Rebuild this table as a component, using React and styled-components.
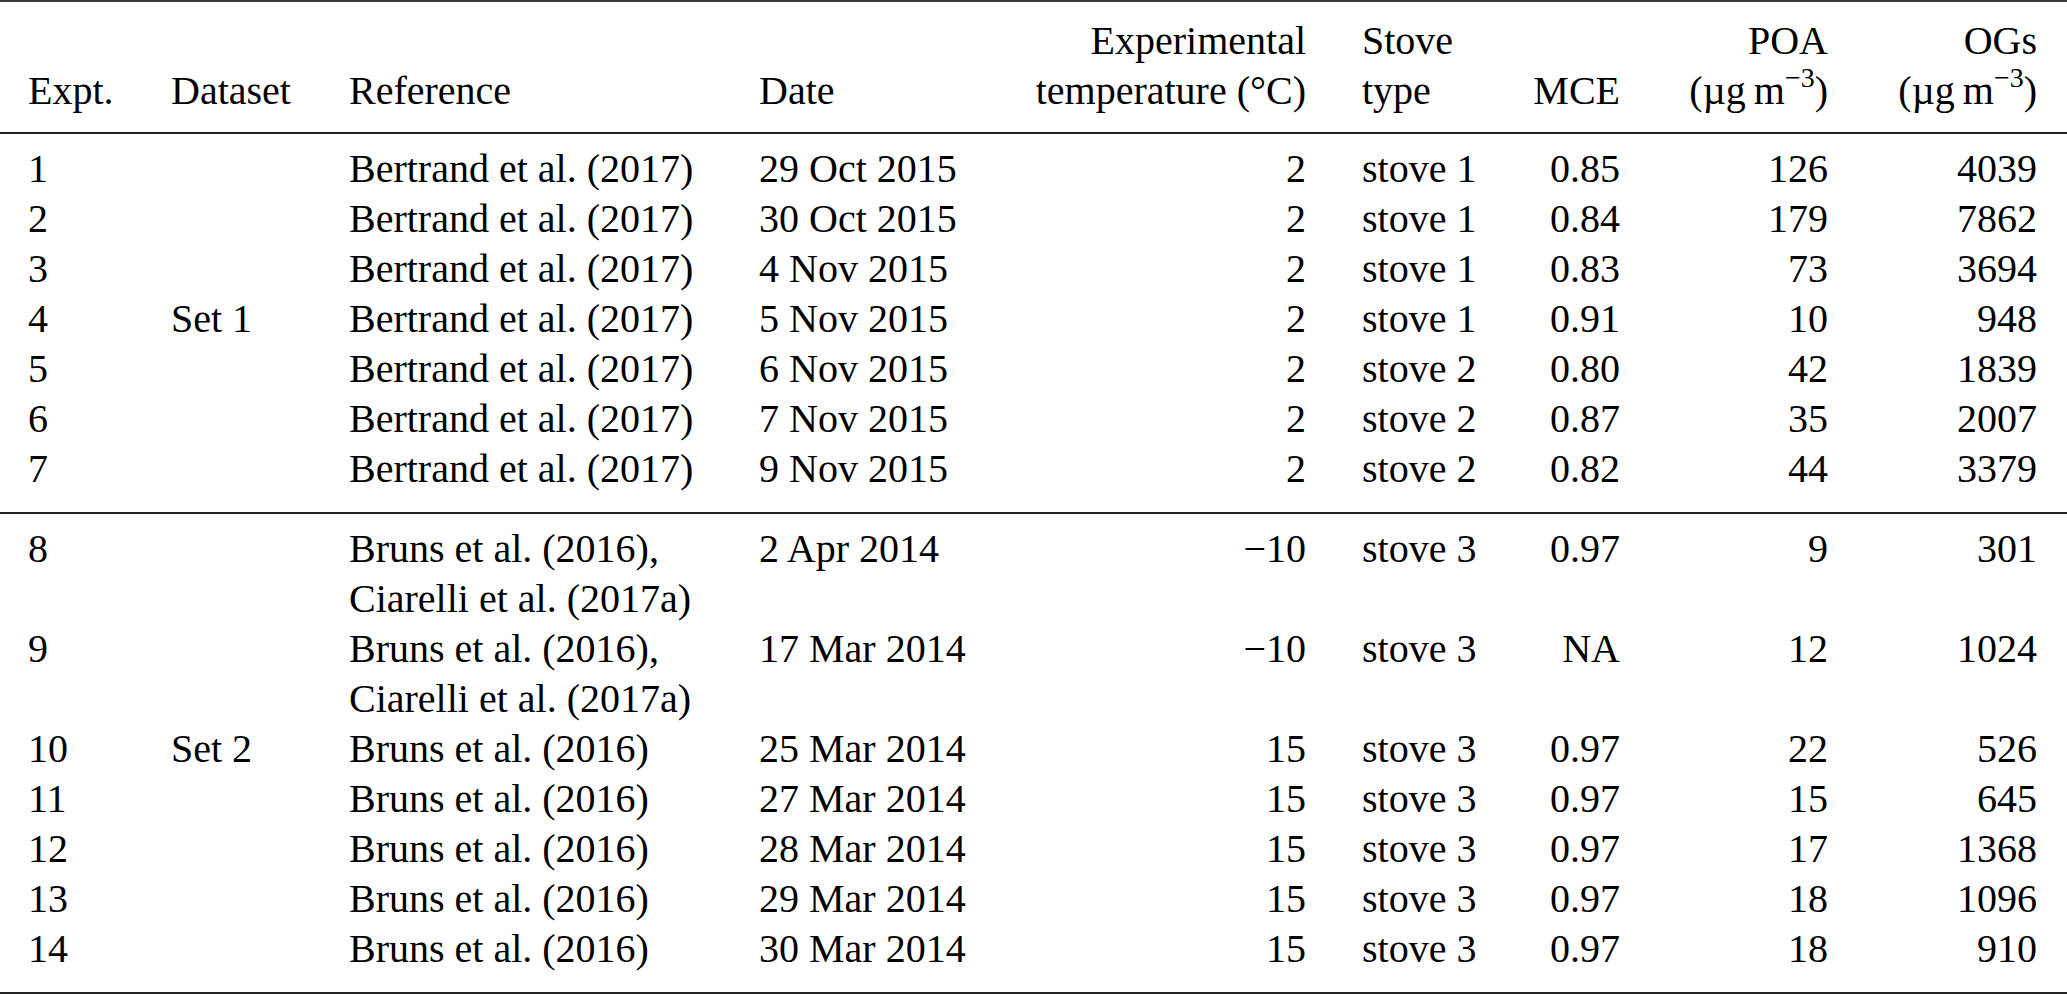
import styled, { createGlobalStyle } from "styled-components";

const GlobalStyle = createGlobalStyle`
  html, body {
    margin: 0;
    padding: 0;
    background: #fff;
  }
`;

const columns = [
  { w: 171, pl: 28 },
  { w: 178 },
  { w: 410 },
  { w: 141 },
  { w: 406, right: true },
  { w: 170, pl: 56 },
  { w: 144, right: true },
  { w: 208, right: true },
  { w: 239, right: true, pr: 30 },
];

const Table = styled.table`
  width: 2067px;
  table-layout: fixed;
  border-collapse: separate;
  border-spacing: 0;
  font-family: "Liberation Serif", "Times New Roman", serif;
  font-size: 40px;
  line-height: 50px;
  color: #000;
`;

const Col = styled.col`
  width: ${(p) => p.$w}px;
`;

const HeadCell = styled.th`
  font-weight: normal;
  text-align: ${(p) => (p.$right ? "right" : "left")};
  vertical-align: bottom;
  padding: 14px ${(p) => p.$pr || 0}px 16px ${(p) => p.$pl || 0}px;
  border-top: 2px solid #3a3a3a;
  border-bottom: 2px solid #222;
  white-space: nowrap;
`;

const Cell = styled.td`
  text-align: ${(p) => (p.$right ? "right" : "left")};
  vertical-align: top;
  padding: ${(p) => (p.$first ? 10 : 0)}px ${(p) => p.$pr || 0}px
    ${(p) => (p.$last ? 18 : 0)}px ${(p) => p.$pl || 0}px;
  border-bottom: ${(p) => (p.$last ? "2px solid #222" : "none")};
  white-space: nowrap;
`;

const Sup = styled.sup`
  font-size: 0.7em;
  line-height: 0;
  vertical-align: 0.62em;
`;

const Unit = () => (
  <>
    (µg{"\u2009"}m<Sup>−3</Sup>)
  </>
);

const header = [
  "Expt.",
  "Dataset",
  "Reference",
  "Date",
  <>
    Experimental
    <br />
    temperature (°C)
  </>,
  <>
    Stove
    <br />
    type
  </>,
  "MCE",
  <>
    POA
    <br />
    <Unit />
  </>,
  <>
    OGs
    <br />
    <Unit />
  </>,
];

const bert = "Bertrand et al. (2017)";
const bruns = "Bruns et al. (2016)";
const both = (
  <>
    Bruns et al. (2016),
    <br />
    Ciarelli et al. (2017a)
  </>
);

const groups = [
  [
    ["1", "", bert, "29 Oct 2015", "2", "stove 1", "0.85", "126", "4039"],
    ["2", "", bert, "30 Oct 2015", "2", "stove 1", "0.84", "179", "7862"],
    ["3", "", bert, "4 Nov 2015", "2", "stove 1", "0.83", "73", "3694"],
    ["4", "Set 1", bert, "5 Nov 2015", "2", "stove 1", "0.91", "10", "948"],
    ["5", "", bert, "6 Nov 2015", "2", "stove 2", "0.80", "42", "1839"],
    ["6", "", bert, "7 Nov 2015", "2", "stove 2", "0.87", "35", "2007"],
    ["7", "", bert, "9 Nov 2015", "2", "stove 2", "0.82", "44", "3379"],
  ],
  [
    ["8", "", both, "2 Apr 2014", "−10", "stove 3", "0.97", "9", "301"],
    ["9", "", both, "17 Mar 2014", "−10", "stove 3", "NA", "12", "1024"],
    ["10", "Set 2", bruns, "25 Mar 2014", "15", "stove 3", "0.97", "22", "526"],
    ["11", "", bruns, "27 Mar 2014", "15", "stove 3", "0.97", "15", "645"],
    ["12", "", bruns, "28 Mar 2014", "15", "stove 3", "0.97", "17", "1368"],
    ["13", "", bruns, "29 Mar 2014", "15", "stove 3", "0.97", "18", "1096"],
    ["14", "", bruns, "30 Mar 2014", "15", "stove 3", "0.97", "18", "910"],
  ],
];

export default function App() {
  return (
    <>
      <GlobalStyle />
      <Table>
        <colgroup>
          {columns.map((c, i) => (
            <Col key={i} $w={c.w} />
          ))}
        </colgroup>
        <thead>
          <tr>
            {header.map((h, i) => (
              <HeadCell
                key={i}
                $right={columns[i].right}
                $pl={columns[i].pl}
                $pr={columns[i].pr}
              >
                {h}
              </HeadCell>
            ))}
          </tr>
        </thead>
        {groups.map((rows, g) => (
          <tbody key={g}>
            {rows.map((row, r) => (
              <tr key={r}>
                {row.map((v, i) => (
                  <Cell
                    key={i}
                    $right={columns[i].right}
                    $pl={columns[i].pl}
                    $pr={columns[i].pr}
                    $first={r === 0}
                    $last={r === rows.length - 1}
                  >
                    {v}
                  </Cell>
                ))}
              </tr>
            ))}
          </tbody>
        ))}
      </Table>
    </>
  );
}
